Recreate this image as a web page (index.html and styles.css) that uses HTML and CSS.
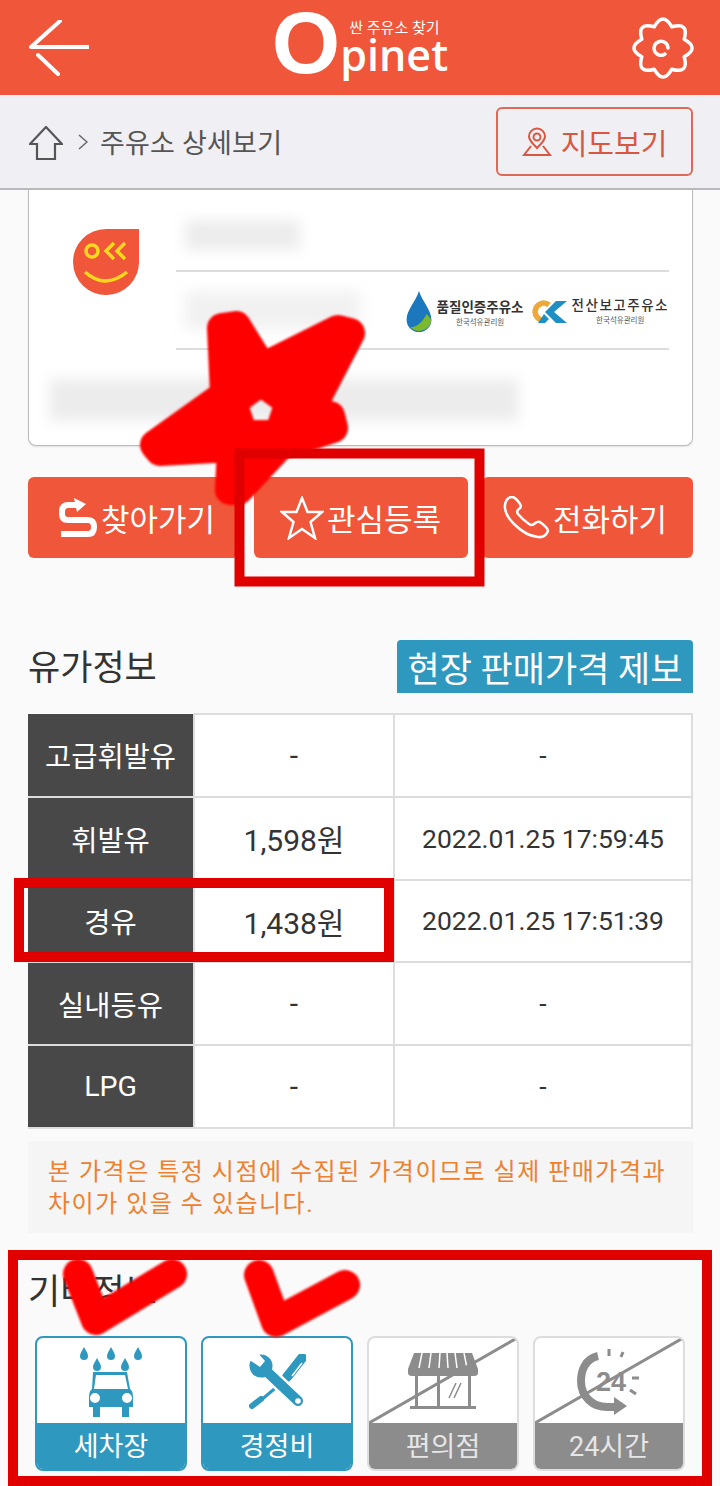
FILE: index.html
```html
<!DOCTYPE html>
<html lang="ko">
<head>
  <meta charset="UTF-8" />
  <meta name="viewport" content="width=device-width, initial-scale=1.0"/>
  <title>주유소 상세보기</title>
  <link rel="stylesheet" href="styles.css">
</head>
<body>
  <div class="page">
    <header class="topbar">
      <svg class="back-icon" viewBox="0 0 60 56"><path d="M31 1 L2 27 H60 M9 35 L29 54"/></svg>
      <div class="logo">
        <span class="logo-o">O</span>
        <div class="logo-right">
          <span class="logo-sub">싼 주유소 찾기</span>
          <span class="logo-name">pinet</span>
        </div>
      </div>
      <svg class="gear-icon" viewBox="-2 -2 64 64"><path d="M51.200 21.200 Q67 30 51.200 38.800 Q56.200 56.200 38.800 51.200 Q30 67 21.200 51.200 Q3.800 56.200 8.800 38.800 Q-7 30 8.800 21.200 Q3.800 3.800 21.200 8.800 Q30 -7 38.800 8.800 Q56.200 3.800 51.200 21.200 Z"/><path d="M32 36 A7 7 0 1 1 35 30"/></svg>
    </header>

    <nav class="crumb">
      <svg class="home-icon" viewBox="0 0 34 34"><path d="M1 18 L17 1 L33 18 H26 V33 H8 V18 Z"/></svg>
      <svg class="crumb-sep" viewBox="0 0 10 16"><path d="M1 1 L9 8 L1 15"/></svg>
      <span class="crumb-text">주유소 상세보기</span>
      <button class="map-btn">
        <svg viewBox="0 0 30 30"><circle cx="15" cy="10" r="3.500"/><path d="M15 21 C10 16 7 13 7 9.500 A8 8 0 0 1 23 9.500 C23 13 20 16 15 21 Z M9 19 L2 28 H28 L21 19"/></svg>
        지도보기
      </button>
    </nav>

    <section class="card">
      <div class="card-top">
        <svg class="brand" viewBox="0 0 67 67">
          <path d="M66 1 V33 A33 33 0 1 1 33 1 Z" fill="#f0563a"/>
          <circle cx="19" cy="23" r="6" fill="none" stroke="#ffd81e" stroke-width="3.500"/>
          <path d="M41 15 L33 23 L41 31 M52 15 L44 23 L52 31 M12 44 Q32 62 54 44" fill="none" stroke="#ffd81e" stroke-width="3.500"/>
        </svg>
        <div class="info">
          <div class="info-row info-name"><div class="blur blur-name"></div></div>
          <div class="info-row info-tel">
            <div class="blur blur-tel"></div>
            <div class="badges">
              <svg class="badge-drop" viewBox="0 0 28 44">
                <path d="M14 0 C18 12 27 20 27 30 A13 13 0 0 1 1 30 C1 20 10 12 14 0 Z" fill="#1b78be"/>
                <path d="M5 38 C12 38 18 32 22 24 L27 30 A13 13 0 0 1 5 38 Z" fill="#7cb92c"/>
              </svg>
              <div class="badge-text">
                <strong>품질인증주유소</strong>
                <small>한국석유관리원</small>
              </div>
              <svg class="badge-ok" viewBox="0 0 36 24">
                <path d="M17 5 A8.500 8.500 0 1 0 13 20" fill="none" stroke="#eea83a" stroke-width="5.500"/>
                <path d="M35 1 H24 L13 12 L24 23 H35 L22 12 Z M12 14 L17 19 L13 23 H6 Z" fill="#1e8fc4"/>
              </svg>
              <div class="badge-text wide">
                <strong>전산보고주유소</strong>
                <small>한국석유관리원</small>
              </div>
            </div>
          </div>
        </div>
      </div>
      <div class="blur blur-addr"></div>
    </section>

    <div class="actions">
      <button class="action">
        <svg class="icon-route" viewBox="0 0 40 40"><path d="M24 7 H10 Q4 7 4 14 V16 Q4 22 10 22 H30 Q36 22 36 29 Q36 36 30 36 H3" fill="none" stroke="#fff" stroke-width="6"/><path d="M16 0 L28 6 L19 14 Z" fill="#fff"/></svg>
        찾아가기
      </button>
      <button class="action">
        <svg class="icon-star" viewBox="0 0 44 44"><path d="M22 2 L27.500 16 H42 L30.500 26 L35 42 L22 33 L9 42 L13.500 26 L2 16 H16.500 Z" fill="none" stroke="#fff" stroke-width="2.500"/></svg>
        관심등록
      </button>
      <button class="action">
        <svg class="icon-phone" viewBox="0 0 48 43"><path d="M9 1 Q4 2 3 9 Q2 18 12 28 Q24 40 36 41 Q43 42 46 35 Q46 32 38 26 Q35 25 32 28 Q30 30 27 28 Q20 23 16 18 Q14 15 17 13 Q20 11 18 8 Q13 0 9 1 Z" fill="none" stroke="#fff" stroke-width="2.500"/></svg>
        전화하기
      </button>
    </div>

    <div class="price-head">
      <h3 class="section-title">유가정보</h3>
      <button class="report-btn">현장 판매가격 제보</button>
    </div>

    <table class="price-table">
      <tr><th>고급휘발유</th><td class="price">-</td><td class="date">-</td></tr>
      <tr><th>휘발유</th><td class="price">1,598원</td><td class="date">2022.01.25 17:59:45</td></tr>
      <tr><th>경유</th><td class="price">1,438원</td><td class="date">2022.01.25 17:51:39</td></tr>
      <tr><th>실내등유</th><td class="price">-</td><td class="date">-</td></tr>
      <tr><th>LPG</th><td class="price">-</td><td class="date">-</td></tr>
    </table>

    <p class="note">본 가격은 특정 시점에 수집된 가격이므로 실제 판매가격과<br>차이가 있을 수 있습니다.</p>

    <h3 class="section-title etc-title">기타정보</h3>

    <div class="tiles">
      <div class="tile">
        <div class="tile-body">
          <svg class="icon-car" viewBox="0 0 62 70" fill="#2e98bf">
            <path d="M4 0 C6 4 8 6 8 9 A4 4 0 0 1 0 9 C0 6 2 4 4 0 Z"/>
            <path d="M31 0 C33 4 35 6 35 9 A4 4 0 0 1 27 9 C27 6 29 4 31 0 Z"/>
            <path d="M58 0 C60 4 62 6 62 9 A4 4 0 0 1 54 9 C54 6 56 4 58 0 Z"/>
            <path d="M17 11 C19 15 21 17 21 20 A4 4 0 0 1 13 20 C13 17 15 15 17 11 Z"/>
            <path d="M45 11 C47 15 49 17 49 20 A4 4 0 0 1 41 20 C41 17 43 15 45 11 Z"/>
            <path fill-rule="evenodd" d="M13 25 H47 L50 42 Q53 44 53 50 V60 H49 V70 H42 V60 H20 V70 H13 V60 H9 V50 Q9 44 12 42 Z M16 28 L14 42 H48 L45 28 Z M15 46 A5 5 0 1 0 15 56 A5 5 0 1 0 15 46 Z M47 46 A5 5 0 1 0 47 56 A5 5 0 1 0 47 46 Z"/>
          </svg>
        </div>
        <div class="tile-label">세차장</div>
      </div>
      <div class="tile">
        <div class="tile-body">
          <svg class="icon-tools" viewBox="0 0 57 55">
            <path d="M53 4 L38 23" fill="none" stroke="#2e98bf" stroke-width="10" stroke-linecap="round"/>
            <path d="M46 3 L36 16 M53 9 L43 22" fill="none" stroke="#fff" stroke-width="1.500"/>
            <path d="M30 31 L11 47" fill="none" stroke="#2e98bf" stroke-width="3"/>
            <path d="M12 45 L3 52" fill="none" stroke="#2e98bf" stroke-width="6" stroke-linecap="round"/>
            <path d="M13 13 L49 47" fill="none" stroke="#fff" stroke-width="15"/>
            <path d="M13 13 L49 47" fill="none" stroke="#2e98bf" stroke-width="10" stroke-linecap="round"/>
            <circle cx="12" cy="12" r="11.500" fill="#2e98bf"/>
            <path d="M-1 5 L11 13 L16 7 L8 -2 Z" fill="#fff"/>
            <circle cx="49" cy="47" r="2.800" fill="#fff"/>
          </svg>
        </div>
        <div class="tile-label">경정비</div>
      </div>
      <div class="tile off">
        <div class="tile-body">
          <svg class="icon-shop" viewBox="0 0 70 57" fill="#8c8c8c">
            <path d="M6 0 H64 L70 16 V20 Q70 23 66 23 H4 Q0 23 0 20 V16 Z"/>
            <path d="M14 0 L11 15 M23 0 L21 15 M32 0 L31 15 M39 0 L40 15 M47 0 L49 15 M56 0 L59 15" fill="none" stroke="#fff" stroke-width="1.500"/>
            <path d="M7 23 H10 V55 H7 Z M29 23 H32 V55 H29 Z M60 23 H63 V55 H60 Z M2 53 H68 V56 H2 Z"/>
            <path d="M41 45 L48 30 M46 45 L53 30" fill="none" stroke="#8c8c8c" stroke-width="1.500"/>
          </svg>
        </div>
        <div class="tile-label">편의점</div>
      </div>
      <div class="tile off">
        <div class="tile-body">
          <svg class="icon-clock" viewBox="0 0 64 66">
            <path d="M21 7 C8 10 4 22 4 32 C4 48 16 58 30 58 H38" fill="none" stroke="#8c8c8c" stroke-width="8"/>
            <path d="M37 48 L50 57 L37 66 Z" fill="#8c8c8c"/>
            <path d="M32 0 V7 M46 3 L44 8 M55 29 H62 M53 41 L59 45" fill="none" stroke="#8c8c8c" stroke-width="3"/>
            <text x="19" y="42" class="clock-num">24</text>
          </svg>
        </div>
        <div class="tile-label">24시간</div>
      </div>
    </div>

    <!-- 빨간 표시 (스크린샷 위에 그린 낙서) -->
    <svg class="marks" viewBox="0 0 720 1486">
      <path class="scribble" fill-rule="evenodd" d="M222 328 L236 326 L262 368 L338 330 L350 333 L310 410 L330 416 L333 428 L280 445 L238 490 L230 490 L232 447 L160 451 L155 445 L225 395 Z M261 381 L290 402 L279 435 L243 435 L232 402 Z"/>
      <path class="check" d="M78 1274 L96 1320 L172 1274"/>
      <path class="check" d="M259 1275 L276 1322 L345 1285"/>
      <rect class="box" x="239.500" y="453.500" width="240" height="128"/>
      <rect class="box" x="19" y="883" width="370" height="74"/>
      <rect class="box" x="13" y="1255" width="694" height="226"/>
    </svg>
  </div>
</body>
</html>
```

FILE: styles.css
```css
body {
  margin: 0;
  font-family: Roboto, 'Noto Sans CJK KR', sans-serif;
  background: #fafafa;
}

.page {
  position: relative;
  width: 720px;
  height: 1486px;
  overflow: hidden;
}

button {
  font-family: inherit;
}

.topbar {
  height: 95px;
  background: #f0563a;
  display: flex;
  align-items: center;
  justify-content: space-between;
  padding: 0 27px 0 29px;
  box-sizing: border-box;
}

.back-icon {
  width: 60px;
  height: 56px;
  fill: none;
  stroke: #fff;
  stroke-width: 4;
  stroke-linecap: round;
  stroke-linejoin: round;
}

.logo {
  display: flex;
  align-items: flex-start;
  align-self: flex-start;
  color: #fff;
}

.logo-o {
  font-family: 'Liberation Sans', sans-serif;
  font-weight: bold;
  font-size: 88px;
  line-height: 85px;
}

.logo-right {
  display: flex;
  flex-direction: column;
}

.logo-sub {
  font-size: 15px;
  line-height: 20px;
  margin: 18px 0 0 9px;
}

.logo-name {
  font-family: 'Open Sans', sans-serif;
  font-weight: 600;
  font-size: 43px;
  line-height: 34px;
}

.gear-icon {
  width: 64px;
  height: 64px;
  margin-right: -2px;
  fill: none;
  stroke: #fff;
  stroke-width: 3.500;
  stroke-linejoin: round;
  stroke-linecap: round;
}

.crumb {
  height: 95px;
  box-sizing: border-box;
  background: #f0eff4;
  border-bottom: 2px solid #b9b9bc;
  display: flex;
  align-items: center;
  padding: 0 27px 0 29px;
}

.home-icon {
  width: 34px;
  height: 34px;
  margin-top: 3px;
  fill: none;
  stroke: #555;
  stroke-width: 2.200;
}

.crumb-sep {
  width: 10px;
  height: 16px;
  margin: 0 12px 0 15px;
  fill: none;
  stroke: #666;
  stroke-width: 1.500;
}

.crumb-text {
  color: #555;
  font-size: 27px;
  letter-spacing: 0.200px;
  flex: 1;
}

.map-btn {
  width: 197px;
  height: 69px;
  border: 2px solid #dd6a56;
  border-radius: 6px;
  background: transparent;
  color: #d9573f;
  font-size: 29px;
  display: flex;
  align-items: center;
  justify-content: center;
  gap: 9px;
  padding: 0;
}

.map-btn svg {
  width: 30px;
  height: 30px;
  fill: none;
  stroke: #d9573f;
  stroke-width: 2;
}

.card {
  height: 256px;
  box-sizing: border-box;
  margin: 0 27px 0 28px;
  background: #fff;
  border: 1px solid #bbb;
  border-top: none;
  border-radius: 0 0 8px 8px;
  box-shadow: 0 1px 2px rgba(0,0,0,0.1);
}

.card-top {
  display: flex;
  height: 160px;
}

.brand {
  width: 67px;
  height: 67px;
  margin: 38px 0 0 44px;
}

.info {
  margin-left: 36px;
  width: 493px;
}

.info-row {
  border-bottom: 2px solid #ddd;
  position: relative;
}

.info-name {
  height: 80px;
}

.info-tel {
  height: 76px;
  display: flex;
  align-items: center;
}

.blur {
  background: #ececec;
  filter: blur(7px);
}

.blur-name {
  width: 115px;
  height: 30px;
  margin-left: 9px;
  position: relative;
  top: 30px;
}

.blur-tel {
  width: 175px;
  height: 38px;
  margin-left: 9px;
  background: #f1f1f1;
}

.blur-addr {
  width: 470px;
  height: 42px;
  margin: 29px 0 0 20px;
}

.badges {
  display: flex;
  align-items: center;
  margin-left: auto;
}

.badge-drop {
  width: 28px;
  height: 42px;
  margin-top: 3px;
}

.badge-ok {
  width: 36px;
  height: 24px;
  margin: 4px 0 0 8px;
}

.badge-text {
  display: flex;
  flex-direction: column;
  align-items: center;
  margin: 6px 0 0 4px;
  color: #333;
}

.badge-text strong {
  font-size: 13.500px;
  line-height: 19px;
  font-weight: 700;
  white-space: nowrap;
}

.badge-text small {
  font-size: 7.500px;
  line-height: 10px;
  margin-top: 1px;
  color: #555;
}

.badge-text.wide {
  margin-top: 2px;
}

.badge-text.wide strong {
  font-weight: 500;
  letter-spacing: 1.500px;
}

.actions {
  display: flex;
  justify-content: space-between;
  margin: 31px 27px 0 28px;
}

.action {
  width: 211px;
  height: 81px;
  border: none;
  border-radius: 6px;
  background: #f0563a;
  color: #fff;
  font-size: 31px;
  display: flex;
  align-items: center;
  justify-content: center;
  gap: 3px;
  padding: 0;
  white-space: nowrap;
}

.action:nth-child(1) {
  padding-left: 6px;
}

.action:nth-child(2) {
  width: 214px;
}

.action:nth-child(3) {
  padding-right: 6px;
}

.icon-route {
  width: 40px;
  height: 40px;
}

.icon-star {
  width: 44px;
  height: 44px;
}

.icon-phone {
  width: 48px;
  height: 43px;
}

.price-head {
  display: flex;
  justify-content: space-between;
  align-items: center;
  margin: 82px 27px 0 28px;
}

.section-title {
  margin: 0;
  font-size: 35px;
  line-height: 42px;
  font-weight: 400;
  color: #333;
}

.price-head .section-title {
  margin-top: 5px;
}

.report-btn {
  width: 296px;
  height: 53px;
  border: none;
  border-radius: 4px 4px 0 0;
  background: #2e98bf;
  color: #fff;
  font-size: 35px;
  padding: 0;
  white-space: nowrap;
}

.price-table {
  width: 665px;
  margin: 20px 27px 0 28px;
  border-collapse: collapse;
  table-layout: fixed;
  background: #fff;
}

.price-table tr {
  height: 82.800px;
}

.price-table th {
  width: 165px;
  padding: 0;
  background: #484848;
  color: #fff;
  font-size: 28.500px;
  font-weight: 400;
  border-bottom: 2px solid #ddd;
}

.price-table td {
  padding: 0;
  border: 2px solid #ddd;
  text-align: center;
  color: #333;
}

.price {
  width: 198px;
  font-size: 30px;
}

.date {
  font-size: 26.500px;
}

.note {
  margin: 12px 27px 0 28px;
  padding: 15px 20px 13px;
  background: #f5f5f5;
  color: #ee8030;
  font-size: 24px;
  line-height: 32px;
  letter-spacing: 1.500px;
  white-space: nowrap;
}

.etc-title {
  margin: 39px 0 0 28px;
}

.tiles {
  display: flex;
  gap: 14px;
  margin: 22px 0 0 35px;
}

.tile {
  width: 152px;
  height: 135px;
  box-sizing: border-box;
  border: 2px solid #2e98bf;
  border-radius: 8px;
  background: #fff;
  overflow: hidden;
  display: flex;
  flex-direction: column;
}

.tile-body {
  position: relative;
  flex: 1;
  display: flex;
  align-items: center;
  justify-content: center;
  padding-top: 3px;
}

.icon-car {
  width: 62px;
  height: 70px;
}

.icon-tools {
  width: 57px;
  height: 55px;
}

.icon-shop {
  width: 70px;
  height: 57px;
}

.icon-clock {
  width: 64px;
  height: 66px;
}

.tile-label {
  height: 46px;
  line-height: 49px;
  background: #2e98bf;
  color: #fff;
  font-size: 27px;
  text-align: center;
}

.tile.off {
  border-color: #ddd;
}

/* 미운영 서비스 사선 */
.tile.off .tile-body::after {
  content: "";
  position: absolute;
  top: 0;
  left: 0;
  right: 0;
  bottom: 0;
  background: linear-gradient(to top left, transparent calc(50% - 2px), #8c8c8c calc(50% - 1px), #8c8c8c calc(50% + 1px), transparent calc(50% + 2px));
}

.tile.off .tile-label {
  background: #8c8c8c;
  color: #e6e6e6;
}

.clock-num {
  font-family: 'Liberation Sans', sans-serif;
  font-weight: bold;
  font-size: 27px;
  fill: #8c8c8c;
}

.marks {
  position: absolute;
  left: 0;
  top: 0;
  width: 720px;
  height: 1486px;
  pointer-events: none;
}

.scribble {
  fill: #ff0000;
  stroke: #ff0000;
  stroke-width: 30;
  stroke-linejoin: round;
  filter: blur(1px);
}

.check {
  fill: none;
  stroke: #ff0000;
  stroke-width: 30;
  stroke-linecap: round;
  stroke-linejoin: round;
  filter: blur(1px);
}

.box {
  fill: none;
  stroke: #e00000;
  stroke-width: 10;
}
```
